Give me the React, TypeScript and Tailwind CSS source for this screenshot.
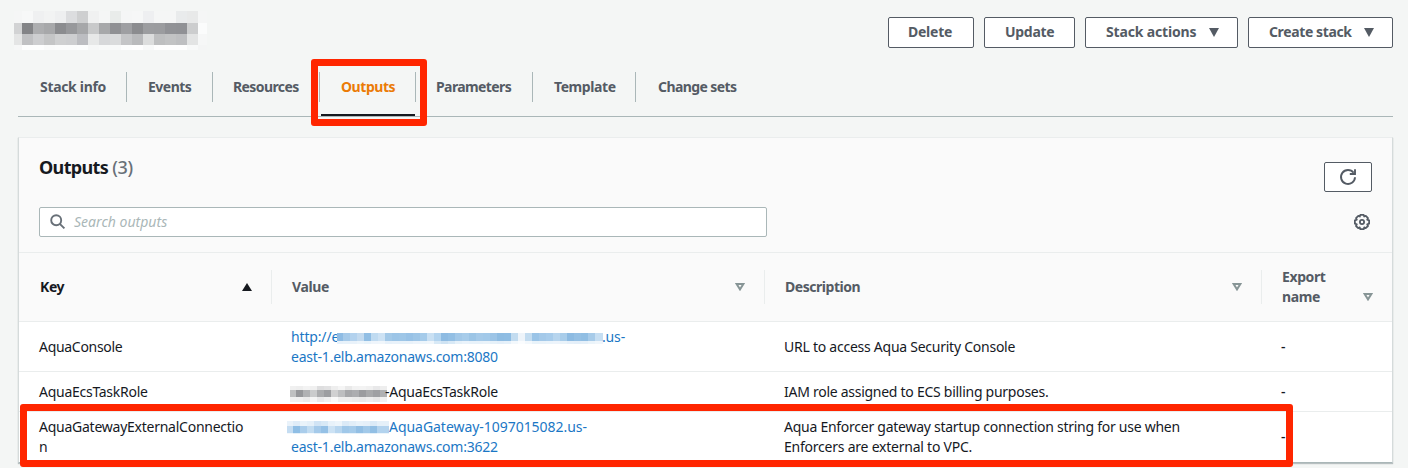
import type { ReactNode } from 'react';

type MosaicProps = { rows: string[][]; widths: number[]; heights: number[]; className?: string };

/* Pixelated block that covers a redacted piece of text. */
function Mosaic({ rows, widths, heights, className }: MosaicProps) {
  const xs = widths.map((_, i) => widths.slice(0, i).reduce((a, b) => a + b, 0));
  const ys = heights.map((_, i) => heights.slice(0, i).reduce((a, b) => a + b, 0));
  const w = widths.reduce((a, b) => a + b, 0);
  const h = heights.reduce((a, b) => a + b, 0);
  return (
    <svg width={w} height={h} className={`shrink-0 ${className ?? ''}`} shapeRendering="crispEdges" aria-hidden="true">
      {rows.map((row, r) =>
        row.map((c, i) => (
          <rect key={`${r}-${i}`} x={xs[i]} y={ys[r]} width={widths[i]} height={heights[r]} fill={`#${c}`} />
        )),
      )}
    </svg>
  );
}

const split = (s: string) => s.split(' ');

const titleMosaic = {
  widths: [8, 11, 11, 11, 11, 11, 11, 11, 11, 11, 11, 11, 11, 11, 11, 11, 11, 9],
  heights: [12, 11, 11, 5],
  rows: [
    split('f5f6f6 f7f8f8 eff0f1 f2f3f3 eeeff0 dcdddf cecfd0 f0f1f1 f5f6f6 e9ecea f5f6f6 f6f7f7 eeeff1 f5f6f6 f5f6f6 e9ebec e8e9e9 f5f6f6'),
    split('d2d3d4 838487 adaeb0 a7a8aa 8b8c8f 97989b a6a7a9 c8c9ca a7a8aa 909194 9e9fa2 8b8c8f 9c9da0 9b9c9f 919296 909195 cccdce fbfcfc'),
    split('e4e5e5 c0c1c3 cdced0 c4c5c6 cfd0d1 cdced0 bcbdc1 e7e8e8 d7d8da dadbdc c4c5c7 b9babc dcdddd bebfc0 c2c3c4 bebfc1 e3e4e4 f6f7f7'),
    split('f6f7f7 fdfefe fdfefe fafbfb fbfcfc fbfcfc fcfdfd f6f7f7 f8f9f9 f8f9f9 fcfdfd fefefe f8f9f9 fefefe fefefe fefefe f8f9f9 f4f5f5'),
  ],
};

const consoleMosaic = {
  widths: [6, ...Array(36).fill(7), 8],
  heights: [8, 3],
  rows: [
    split('8fbce4 a6cae9 b3d2ee c3daef 91bee4 c0dbf1 cde2f4 a3c9e8 9cc5e7 9ec6e7 98c2e6 9ec6e7 a5cbea c9e0f3 b3d4ef 8ebbe2 93bfe4 a2c8e8 a7ccea 9cc5e6 a5cae9 a2c9e9 9cc4e6 8ebce2 8fbde3 c3dcf0 eef4fa c3dcf0 9ac4e7 a4c9e9 a8cceb b7d5ee a9cdea 8dbbe2 95c0e4 91bee3 a7cbe9 c6def2'),
    split('e7f1fa e8f2fa e9f2fa edf5fb e9f3fa eff5fb f0f6fb e7f1fa e9f2fa e8f2fa e9f2fa edf4fb edf5fb f0f6fb d8e9f6 cfe3f3 d8e9f6 e6f1f9 eaf3fb e8f2fa e8f2fa eaf3fa e6f1f9 e4eff9 e6f1fa f3f8fc fafcfe f3f8fc e9f3fa eaf3fa ebf4fb edf4fb eaf3fa e6f0f9 e4eff9 e6f0f9 ebf4fa f0f6fb'),
  ],
};

const roleMosaic = {
  widths: [6, 7, 7, 7, 7, 7, 7, 7, 7, 7, 7, 7, 7, 7],
  heights: [4, 7, 5],
  rows: [
    split('f0f0f0 eeeeee f3f3f3 f0f0f0 dededf e2e2e3 eeeeee f5f5f5 e9e9e9 f2f2f2 f3f3f3 f0f0f0 e8e8e9 eeeeee'),
    split('bfc0c1 96979a b0b1b3 cacbcc abacae 9d9ea1 d0d0d1 bdbec0 a6a7aa acadb0 9b9c9f a8a9ab 9fa0a3 b0b1b3'),
    split('f1f1f1 f0f0f0 ebebeb f5f5f5 e9e9ea f0f0f0 f9f9f9 eeeeee eeeeee ebebeb e9e9e9 ededed e8e8e8 f1f1f1'),
  ],
};

const gatewayMosaic = {
  widths: [6, 7, 7, 7, 7, 7, 7, 7, 7, 7, 7, 7, 7, 12],
  heights: [5, 7, 1],
  rows: [
    split('e9f2fa dfecf8 eaf3fa e5f0f9 d1e4f5 d8e9f6 e8f2fa edf5fb dbeaf7 e2eef8 e8f2fa e6f0f9 dbeaf7 e5f0f9'),
    split('c5ddf2 8fbee5 aacdeb c2dcf1 a5caea 95c1e6 cce2f4 b8d6ef a0c8e9 a5cbea 93bfe4 a2c9e9 92bfe4 b3d3ee'),
    split('f3f8fc e4f0f9 e9f3fa f5f9fd e8f2fa e4f0f9 f5f9fd eff6fb e7f1fa e8f2fa e4f0f9 e8f2fa e4f0f9 edf5fb'),
  ],
};

function Button({ children, className, menu }: { children: ReactNode; className: string; menu?: boolean }) {
  return (
    <button
      className={`flex h-[31px] items-center rounded-[2px] border border-[#545b64] bg-white text-sm leading-5 font-bold text-[#545b64] ${className}`}
    >
      <span className="-mt-[2px] whitespace-nowrap">{children}</span>
      {menu && (
        <svg width="10" height="9" viewBox="0 0 10 9" className="mr-[18px] ml-auto" fill="currentColor">
          <path d="M0 0h10L5 9z" />
        </svg>
      )}
    </button>
  );
}

const tabs = [
  { label: 'Stack info', cls: 'w-[109px] pl-[22px]', text: 'tracking-[-0.32px]' },
  { label: 'Events', cls: 'w-[86px] pl-[21px]', text: 'tracking-[-0.5px]' },
  { label: 'Resources', cls: 'w-[107px] pl-[20px]', text: 'tracking-[-0.6px]' },
  { label: 'Outputs', cls: 'w-[96px] pl-[21px]', text: 'tracking-[-0.45px]', active: true },
  { label: 'Parameters', cls: 'w-[117px] pl-[20px]', text: 'tracking-[-0.6px]' },
  { label: 'Template', cls: 'w-[103px] pl-[21px]', text: 'tracking-[-0.42px]' },
  { label: 'Change sets', cls: 'w-[120px] pl-[22px]', text: 'tracking-[-0.6px]' },
];

function SortIcon({ className }: { className?: string }) {
  return (
    <svg width="10" height="8" viewBox="0 0 10 8" className={className} fill="none" stroke="#879596" strokeWidth="2">
      <path d="M1.6 1h6.8L5 6.4z" />
    </svg>
  );
}

const columns = 'grid grid-cols-[253px_493px_497px_131px]';

export default function App() {
  return (
    <div className="relative h-[468px] w-[1408px] overflow-hidden bg-[#f4f6f5] font-['Noto_Sans',sans-serif] text-sm leading-5 text-[#16191f]">
      <header className="flex h-[72px] items-start justify-between pr-[15px] pl-[14px]">
        <Mosaic {...titleMosaic} className="mt-[11px]" />
        <div className="mt-[17px] flex gap-[10px]">
          <Button className="w-[86px] pl-[19px] tracking-[-0.25px]">Delete</Button>
          <Button className="w-[91px] pl-[20px] tracking-[-0.3px]">Update</Button>
          <Button className="w-[153px] pl-[20px] tracking-[-0.17px]" menu>Stack actions</Button>
          <Button className="w-[145px] pl-[20px] tracking-[-0.38px]" menu>Create stack</Button>
        </div>
      </header>

      <nav className="mr-[15px] ml-[18px] flex h-[45px] border-b border-[#aab7b8] font-bold text-[#545b64]">
        {tabs.map((t, i) => (
          <div key={t.label} className="flex flex-col justify-between whitespace-nowrap">
            <div
              className={`flex h-[30px] items-center border-[#aab7b8] ${t.cls} ${t.text} ${
                i < tabs.length - 1 ? 'border-r' : ''
              } ${t.active ? 'text-[#eb7b06]' : ''}`}
            >
              {t.label}
            </div>
            {t.active && <div className="ml-px h-[2px] w-[94px] bg-[#16191f]" />}
          </div>
        ))}
      </nav>

      <main className="mt-[20px] mr-[15px] ml-[18px] flex h-[326px] flex-col border border-x-[#d5dbdb] border-t-[#eaeded] border-b-[#aab7b8] bg-white shadow-[0_1px_1px_0_rgba(0,28,36,0.25)]">
        <section className="flex h-[115px] flex-col border-b border-[#eaeded] bg-[#fafafa] pr-[20px] pl-[20px]">
          <div className="flex h-[69px] items-start justify-between">
            <h1 className="mt-[17px] text-lg leading-6 font-bold tracking-[-0.65px]">
              Outputs <span className="font-medium tracking-[-0.3px] text-[#687078]">(3)</span>
            </h1>
            <button className="mt-[24px] flex h-[30px] w-[48px] items-center justify-center rounded-[2px] border border-[#545b64] bg-white">
              <svg width="18" height="18" viewBox="0 0 18 18" fill="none" stroke="#545b64" strokeWidth="1.9">
                <path d="M16 9.2A7 7 0 1 1 14.6 4.8" />
                <path d="M16 1.2V6h-5.2" />
              </svg>
            </button>
          </div>
          <div className="flex items-center justify-between">
            <div className="flex h-[30px] w-[728px] items-center rounded-[2px] border border-[#aab7b8] bg-white pl-[10px]">
              <svg width="16" height="16" viewBox="0 0 16 16" fill="none" stroke="#687078" strokeWidth="1.9">
                <circle cx="6.2" cy="6.2" r="5" />
                <path d="M9.8 9.8l4.6 4.6" />
              </svg>
              <span className="ml-[8px] tracking-[0.02px] text-[#aab7b8] italic">Search outputs</span>
            </div>
            <svg width="18" height="18" viewBox="0 0 18 18" fill="none" stroke="#545b64" strokeWidth="1.8" className="mr-px">
              <path
                strokeLinejoin="round"
                d="M7.3 1.9h3.4l.5 1.6 1.6-.7 2.2 2.3-.8 1.5 1.9.7v3.4l-1.9.7.8 1.6-2.3 2.2-1.5-.8-.5 1.8H7.3l-.6-1.8-1.5.8L3 13l.8-1.6-1.9-.7V7.3l1.9-.7L3 5.1l2.3-2.3 1.5.7z"
              />
              <circle cx="9" cy="9" r="2.1" />
            </svg>
          </div>
        </section>

        <div className={`${columns} h-[69px] border-b border-[#eaeded] bg-[#fafafa] py-[17px] font-bold text-[#545b64]`}>
          <div className="flex h-[34px] items-center justify-between border-r border-[#eaeded] pr-[19px] pl-[21px]">
            <span className="tracking-[-0.4px] text-[#16191f]">Key</span>
            <svg width="10" height="8" viewBox="0 0 10 8" fill="#16191f"><path d="M5 0l5 8H0z" /></svg>
          </div>
          <div className="flex h-[34px] items-center justify-between border-r border-[#eaeded] pr-[19px] pl-[20px]">
            <span className="tracking-[-0.35px]">Value</span>
            <SortIcon />
          </div>
          <div className="flex h-[34px] items-center justify-between border-r border-[#eaeded] pr-[19px] pl-[20px]">
            <span className="tracking-[-0.46px]">Description</span>
            <SortIcon />
          </div>
          <div className="flex h-[34px] items-center justify-between pr-[20px] pl-[20px]">
            <span className="w-[50px] tracking-[-0.4px]">Export name</span>
            <SortIcon className="mt-[20px]" />
          </div>
        </div>

        <div className={`${columns} h-[50px] items-center border-b border-[#eaeded]`}>
          <div className="pl-[20px] tracking-[-0.3px]">AquaConsole</div>
          <div className="pl-[19px] text-[#1b77c5]">
            <div className="flex h-5 items-center">
              <span className="w-[47px] tracking-[-0.15px]">http://e</span>
              <Mosaic {...consoleMosaic} className="-ml-px mt-[3px]" />
              <span className="-ml-px tracking-[-0.15px]">.us-</span>
            </div>
            <div className="tracking-[-0.23px]">east-1.elb.amazonaws.com:8080</div>
          </div>
          <div className="pl-[19px] tracking-[-0.25px]">URL to access Aqua Security Console</div>
          <div className="pl-[19px] font-medium">-</div>
        </div>

        <div className={`${columns} h-[40px] items-center border-b border-[#eaeded]`}>
          <div className="pl-[20px] tracking-[-0.27px]">AquaEcsTaskRole</div>
          <div className="flex items-center pl-[18px]">
            <Mosaic {...roleMosaic} className="mt-[4px]" />
            <span className="-ml-[2px] tracking-[-0.27px]">-AquaEcsTaskRole</span>
          </div>
          <div className="pl-[19px] tracking-[-0.27px]">IAM role assigned to ECS billing purposes.</div>
          <div className="pl-[19px] font-medium">-</div>
        </div>

        <div className={`${columns} h-[50px] items-center`}>
          <div className="pl-[20px] tracking-[-0.25px]">AquaGatewayExternalConnectio<br />n</div>
          <div className="pl-[19px] text-[#1b77c5]">
            <div className="-ml-[4px] flex h-5 items-center">
              <Mosaic {...gatewayMosaic} />
              <span className="tracking-[-0.04px]">AquaGateway-1097015082.us-</span>
            </div>
            <div className="tracking-[-0.23px]">east-1.elb.amazonaws.com:3622</div>
          </div>
          <div className="pl-[19px]">
            <div className="tracking-[-0.26px]">Aqua Enforcer gateway startup connection string for use when</div>
            <div className="tracking-[-0.23px]">Enforcers are external to VPC.</div>
          </div>
          <div className="pl-[19px] font-medium">-</div>
        </div>
      </main>

      <div className="absolute top-[59px] left-[311px] h-[67px] w-[116px] rounded-[3px] border-[7px] border-[#ff2600]" />
      <div className="absolute top-[404px] left-[20px] h-[63px] w-[1273px] rounded-[3px] border-[7px] border-[#ff2600]" />
    </div>
  );
}
